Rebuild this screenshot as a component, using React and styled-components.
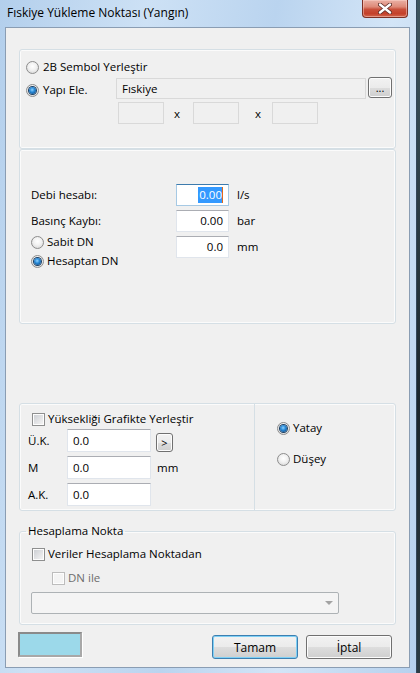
import React from "react";
import styled, { createGlobalStyle, css } from "styled-components";

const GlobalStyle = createGlobalStyle`
  html, body { margin: 0; padding: 0; }
  body {
    width: 420px;
    height: 673px;
    overflow: hidden;
    background: linear-gradient(180deg, #3d5560 0%, #1b262c 60%, #2c3c44 100%);
    font-family: "Segoe UI", "Open Sans", "Noto Sans", sans-serif;
    font-size: 11.5px;
    color: #000;
  }
`;

const Frame = styled.div`
  width: 417px;
  height: 673px;
  box-sizing: border-box;
  padding: 0 6px 5px 5px;
  display: flex;
  flex-direction: column;
  border-right: 1px solid #33475a;
  background: linear-gradient(100deg, #b3cfec 0%, #cde1f5 28%, #bad4ef 52%, #d3e5f7 74%, #b6d1ee 100%);
`;

const TitleBar = styled.div`
  height: 27px;
  display: flex;
  justify-content: space-between;
  align-items: flex-start;
`;

const Title = styled.div`
  margin: 5px 0 0 2px;
  line-height: 16px;
  font-size: 12px;
  color: #000;
`;

const CloseButton = styled.div`
  width: 46px;
  height: 18px;
  margin-right: 2px;
  box-sizing: border-box;
  border: 1px solid #7c3025;
  border-top: none;
  border-radius: 0 0 4px 4px;
  background: linear-gradient(180deg, #eab1a5 0%, #de8a78 40%, #c9503b 55%, #c4412b 80%, #d2674f 100%);
  box-shadow: inset 0 0 0 1px rgba(255, 220, 210, 0.45);
  display: flex;
  align-items: center;
  justify-content: center;
`;

const Client = styled.div`
  flex: 1;
  background: #f0f0f0;
  border: 1px solid #8a9db3;
  padding: 21px 13px 0 13px;
  display: flex;
  flex-direction: column;
`;

const Group = styled.div`
  border: 1px solid #d5dfe5;
  border-radius: 3px;
  box-shadow: inset 0 0 0 1px #fbfbfb;
  box-sizing: border-box;
  height: ${(p) => p.$h}px;
  margin-top: ${(p) => p.$mt || 0}px;
  padding: ${(p) => p.$pad};
  display: flex;
  flex-direction: column;
`;

const SplitGroup = styled(Group)`
  flex-direction: row;
  padding: 0;
`;

const SplitLeft = styled.div`
  width: 234px;
  padding: 7px 0 0 0;
  display: flex;
  flex-direction: column;
  border-right: 1px solid #d5dfe5;
`;

const SplitRight = styled.div`
  flex: 1;
  padding: 16px 0 0 22px;
  display: flex;
  flex-direction: column;
  gap: 15px;
`;

const FieldSet = styled.fieldset`
  margin: 12px 0 0 0;
  padding: 0 0 9px 0;
  height: 102px;
  box-sizing: border-box;
  border: 1px solid #d5dfe5;
  border-radius: 3px;
  box-shadow: inset 0 0 0 1px #fbfbfb;
  min-width: 0;
`;

const Legend = styled.legend`
  margin-left: 6px;
  padding: 0 2px;
  line-height: 16px;
`;

const FieldBody = styled.div`
  padding-left: 11px;
  display: flex;
  flex-direction: column;
`;

const Row = styled.div`
  display: flex;
  align-items: ${(p) => p.$align || "center"};
  margin-top: ${(p) => p.$mt || 0}px;
  padding-left: ${(p) => p.$pl || 0}px;
`;

const Option = styled.label`
  display: flex;
  align-items: center;
  gap: ${(p) => (p.$gap === undefined ? 3 : p.$gap)}px;
  height: 16px;
  line-height: 16px;
  width: ${(p) => (p.$w ? `${p.$w}px` : "auto")};
  margin-top: ${(p) => p.$mt || 0}px;
  margin-left: ${(p) => p.$ml || 0}px;
  color: ${(p) => (p.$disabled ? "#6d6d6d" : "#000")};
  white-space: nowrap;
  flex: none;
`;

const RadioDot = styled.span`
  position: relative;
  width: 13px;
  height: 13px;
  box-sizing: border-box;
  border-radius: 50%;
  border: 1px solid #8d8d8d;
  background: radial-gradient(circle at 50% 40%, #ffffff 0%, #f1f1f1 45%, #cfcfcf 100%);
  flex: none;
  ${(p) =>
    p.$checked &&
    css`
      &::after {
        content: "";
        position: absolute;
        left: 2px;
        top: 2px;
        width: 7px;
        height: 7px;
        border-radius: 50%;
        background: radial-gradient(circle at 45% 40%, #8fd3ff 0%, #2a8bd8 40%, #0b4b8a 85%);
        box-shadow: 0 0 0 1px #1b3f63;
      }
    `}
`;

const CheckBox = styled.span`
  width: 13px;
  height: 13px;
  box-sizing: border-box;
  border: 1px solid ${(p) => (p.$disabled ? "#bdbdbd" : "#8e8f8f")};
  background: ${(p) =>
    p.$disabled
      ? "#f4f4f4"
      : "linear-gradient(135deg, #c9ccd1 0%, #e3e4e6 55%, #f7f7f7 100%)"};
  box-shadow: inset 0 0 0 1px #fdfdfd;
  flex: none;
`;

const Label = styled.span`
  width: ${(p) => p.$w}px;
  flex: none;
  line-height: 16px;
`;

const TextBox = styled.div`
  box-sizing: border-box;
  width: ${(p) => p.$w}px;
  height: ${(p) => p.$h || 22}px;
  margin-top: ${(p) => p.$mt || 0}px;
  border: 1px solid #e0e5ec;
  border-top-color: #abadb3;
  background: ${(p) => (p.$readonly ? "#f0f0f0" : "#fff")};
  display: flex;
  align-items: center;
  justify-content: ${(p) => (p.$right ? "flex-end" : "flex-start")};
  padding: 0 5px;
  line-height: 16px;
  flex: none;
  ${(p) =>
    p.$readonly &&
    css`
      border-color: #d9d9d9;
    `}
  ${(p) =>
    p.$focused &&
    css`
      border-color: #a6c9e4;
      border-top-color: #3d7bad;
    `}
`;

const Selected = styled.span`
  background: #3399ff;
  color: #fff;
  border-right: 1px solid #e06a1a;
  padding-left: 1px;
`;

const Unit = styled.span`
  margin-left: ${(p) => p.$ml || 8}px;
  line-height: ${(p) => p.$lh || 16}px;
`;

const Sep = styled.span`
  width: ${(p) => p.$w}px;
  padding-left: ${(p) => p.$pl}px;
  box-sizing: border-box;
  flex: none;
`;

const SmallButton = styled.div`
  box-sizing: border-box;
  width: ${(p) => p.$w}px;
  height: ${(p) => p.$h}px;
  margin-left: ${(p) => p.$ml || 0}px;
  align-self: ${(p) => p.$self || "auto"};
  border: 1px solid #707070;
  border-radius: 3px;
  background: linear-gradient(180deg, #f2f2f2 0%, #ebebeb 50%, #dddddd 51%, #cfcfcf 100%);
  box-shadow: inset 0 0 0 1px #fcfcfc;
  display: flex;
  align-items: center;
  justify-content: center;
  font-size: 11px;
  line-height: 12px;
  flex: none;
`;

const Column = styled.div`
  display: flex;
  flex-direction: column;
  gap: ${(p) => p.$gap || 0}px;
  margin-top: ${(p) => p.$mt || 0}px;
  width: ${(p) => (p.$w ? `${p.$w}px` : "auto")};
  flex: none;
`;

const Combo = styled.div`
  box-sizing: border-box;
  width: 308px;
  height: 22px;
  margin-top: 6px;
  border: 1px solid #adb2b5;
  border-radius: 2px;
  background: #f4f4f4;
  display: flex;
  align-items: center;
  justify-content: flex-end;
  padding-right: 5px;
`;

const ComboArrow = styled.span`
  width: 0;
  height: 0;
  border-left: 4px solid transparent;
  border-right: 4px solid transparent;
  border-top: 4px solid #a3a3a3;
`;

const BottomBar = styled.div`
  display: flex;
  align-items: flex-start;
  margin-top: 7px;
  padding-right: 4px;
`;

const Swatch = styled.div`
  width: 64px;
  height: 25px;
  margin-left: -1px;
  box-sizing: border-box;
  border: 2px solid #8a8a8a;
  border-right-color: #a8a8a8;
  border-bottom-color: #a8a8a8;
  box-shadow: 1px 1px 0 #ffffff;
  background: #9cd9ea;
`;

const DialogButton = styled.button`
  font: inherit;
  font-size: 12px;
  color: #000;
  width: 86px;
  height: 24px;
  margin-top: 3px;
  margin-left: ${(p) => p.$ml || 0}px;
  padding: 0;
  border-radius: 3px;
  border: 1px solid ${(p) => (p.$default ? "#3c7fb1" : "#707070")};
  background: linear-gradient(180deg, #f2f2f2 0%, #ebebeb 50%, #dddddd 51%, #cfcfcf 100%);
  box-shadow: inset 0 0 0 1px ${(p) => (p.$default ? "#7fd0f5" : "#fcfcfc")};
`;

const Spacer = styled.div`
  flex: 1;
`;

const Radio = ({ checked, children, ...rest }) => (
  <Option {...rest}>
    <RadioDot $checked={checked} />
    {children}
  </Option>
);

const Check = ({ disabled, children, ...rest }) => (
  <Option $disabled={disabled} {...rest}>
    <CheckBox $disabled={disabled} />
    {children}
  </Option>
);

const CloseGlyph = () => (
  <svg width="14" height="11" viewBox="0 0 14 11">
    <path d="M2 1.5 L12 9.5 M12 1.5 L2 9.5" stroke="#5a2a24" strokeWidth="4" strokeLinecap="round" />
    <path d="M2 1.5 L12 9.5 M12 1.5 L2 9.5" stroke="#ffffff" strokeWidth="2.4" strokeLinecap="round" />
  </svg>
);

export default function App() {
  return (
    <>
      <GlobalStyle />
      <Frame>
        <TitleBar>
          <Title>Fıskiye Yükleme Noktası (Yangın)</Title>
          <CloseButton>
            <CloseGlyph />
          </CloseButton>
        </TitleBar>
        <Client>
          <Group $h={100} $pad="9px 3px 0 6px">
            <Row>
              <Radio $gap={4}>2B Sembol Yerleştir</Radio>
            </Row>
            <Row $mt={2} $align="flex-start">
              <Radio checked $gap={4} $w={90} $mt={5}>
                Yapı Ele.
              </Radio>
              <TextBox $w={250} $h={21} $mt={1} $readonly>
                Fıskiye
              </TextBox>
              <SmallButton $w={24} $h={21} $ml={2}>
                ...
              </SmallButton>
            </Row>
            <Row $mt={3} $pl={92}>
              <TextBox $w={46} $readonly />
              <Sep $w={29} $pl={10}>x</Sep>
              <TextBox $w={46} $readonly />
              <Sep $w={33} $pl={16}>x</Sep>
              <TextBox $w={46} $readonly />
            </Row>
          </Group>

          <Group $h={175} $pad="34px 0 0 11px">
            <Row>
              <Label $w={145}>Debi hesabı:</Label>
              <TextBox $w={53} $right $focused>
                <Selected>0.00</Selected>
              </TextBox>
              <Unit>l/s</Unit>
            </Row>
            <Row $mt={4}>
              <Label $w={145}>Basınç Kaybı:</Label>
              <TextBox $w={53} $right>
                0.00
              </TextBox>
              <Unit>bar</Unit>
            </Row>
            <Row $mt={4} $align="flex-start">
              <Column $w={145} $gap={3} $mt={-2}>
                <Radio>Sabit DN</Radio>
                <Radio checked>Hesaptan DN</Radio>
              </Column>
              <TextBox $w={53} $right>
                0.0
              </TextBox>
              <Unit $lh={22}>mm</Unit>
            </Row>
          </Group>

          <SplitGroup $h={108} $mt={79}>
            <SplitLeft>
              <Row $pl={12}>
                <Check>Yüksekliği Grafikte Yerleştir</Check>
              </Row>
              <Row $mt={2} $pl={8}>
                <Label $w={39}>Ü.K.</Label>
                <TextBox $w={84} $h={23}>
                  0.0
                </TextBox>
                <SmallButton $w={17} $h={19} $ml={5} $self="flex-end">
                  &gt;
                </SmallButton>
              </Row>
              <Row $mt={4} $pl={8}>
                <Label $w={39}>M</Label>
                <TextBox $w={84} $h={23}>
                  0.0
                </TextBox>
                <Unit $ml={6}>mm</Unit>
              </Row>
              <Row $mt={4} $pl={8}>
                <Label $w={39}>A.K.</Label>
                <TextBox $w={84} $h={23}>
                  0.0
                </TextBox>
              </Row>
            </SplitLeft>
            <SplitRight>
              <Radio checked>Yatay</Radio>
              <Radio>Düşey</Radio>
            </SplitRight>
          </SplitGroup>

          <FieldSet>
            <Legend>Hesaplama Nokta</Legend>
            <FieldBody>
              <Check $mt={7} $ml={1}>
                Veriler Hesaplama Noktadan
              </Check>
              <Check disabled $mt={8} $ml={21}>
                DN ile
              </Check>
              <Combo>
                <ComboArrow />
              </Combo>
            </FieldBody>
          </FieldSet>

          <BottomBar>
            <Swatch />
            <Spacer />
            <DialogButton $default>Tamam</DialogButton>
            <DialogButton $ml={8}>İptal</DialogButton>
          </BottomBar>
        </Client>
      </Frame>
    </>
  );
}
